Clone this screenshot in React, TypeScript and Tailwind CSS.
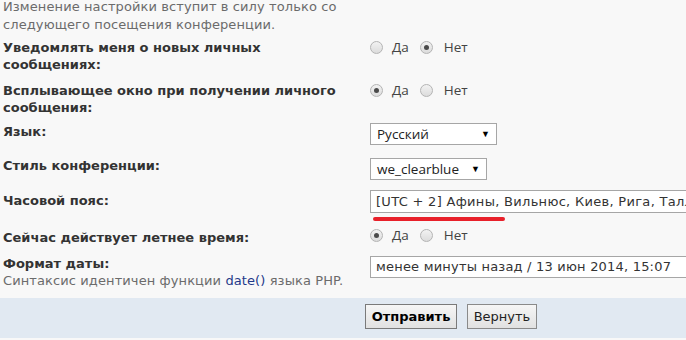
import React from "react";

function Radio({ checked }: { checked: boolean }) {
  return (
    <span className="w-[13px] h-[13px] rounded-full border border-[#b4b4b4] bg-gradient-to-b from-[#f2f2f2] to-[#dcdcdc] flex items-center justify-center shrink-0">
      {checked && <span className="w-[5px] h-[5px] rounded-full bg-[#4a4a4a]" />}
    </span>
  );
}

function YesNo({ yes }: { yes: boolean }) {
  return (
    <div className="flex items-center h-[17px] text-[13.5px] text-[#444] font-['Open_Sans',sans-serif]">
      <Radio checked={yes} />
      <span className="ml-[9px]">Да</span>
      <span className="ml-[11px]"><Radio checked={!yes} /></span>
      <span className="ml-[11px]">Нет</span>
    </div>
  );
}

function Select({ value, width }: { value: string; width: string }) {
  return (
    <div className={`${width} h-[22px] bg-white border border-[#a6a6a6] flex items-center justify-between pl-[6px] pr-[6px] text-[13.5px] text-[#222] font-['Open_Sans',sans-serif]`}>
      <span>{value}</span>
      <span className="text-[9px] text-black">▼</span>
    </div>
  );
}

export default function App() {
  const label = "shrink-0 whitespace-nowrap text-[13px] leading-[17px] font-bold text-[#333]";
  return (
    <div className="w-[686px] h-[340px] overflow-hidden bg-[#f8f8f8] font-['DejaVu_Sans',Verdana,sans-serif]">
      <div className="h-[36px] pl-[3px]">
        <p className="-mt-[2px] text-[13px] leading-[18px] tracking-[0.1px] text-[#6b6b6b] whitespace-nowrap">
          Изменение настройки вступит в силу только со<br />следующего посещения конференции.
        </p>
      </div>

      <div className="flex h-[43px]">
        <div className={`w-[365px] pl-[3px] pt-[5px] ${label}`}>
          Уведомлять меня о новых личных<br />сообщениях:
        </div>
        <div className="pl-[5px] pt-[5px]">
          <YesNo yes={false} />
        </div>
      </div>

      <div className="flex h-[39px]">
        <div className={`w-[365px] pl-[3px] pt-[5px] ${label}`}>
          Всплывающее окно при получении личного<br />сообщения:
        </div>
        <div className="pl-[5px] pt-[5px]">
          <YesNo yes={true} />
        </div>
      </div>

      <div className="flex h-[34px]">
        <div className={`w-[365px] pl-[3px] pt-[7px] ${label}`}>Язык:</div>
        <div className="pl-[5px] pt-[7px]">
          <Select value="Русский" width="w-[127px]" />
        </div>
      </div>

      <div className="flex h-[34px]">
        <div className={`w-[365px] pl-[3px] pt-[7px] ${label}`}>Стиль конференции:</div>
        <div className="pl-[5px] pt-[8px]">
          <Select value="we_clearblue" width="w-[117px]" />
        </div>
      </div>

      <div className="flex h-[40px]">
        <div className={`w-[365px] pl-[3px] pt-[8px] ${label}`}>Часовой пояс:</div>
        <div className="shrink-0 pl-[5px] pt-[6px] relative">
          <div className="w-[340px] h-[23px] bg-white border border-[#a6a6a6] flex items-center pl-[5px] text-[13px] tracking-[0.3px] text-[#333] whitespace-nowrap overflow-hidden">
            [UTC + 2] Афины, Вильнюс, Киев, Рига, Таллин
          </div>
          <div className="absolute left-[8px] top-[33px] w-[132px] h-[4px] rounded-full bg-[#e8202a]" />
        </div>
      </div>

      <div className="flex h-[26px]">
        <div className={`w-[365px] pl-[3px] pt-[5px] ${label}`}>Сейчас действует летнее время:</div>
        <div className="pl-[5px] pt-[3px]">
          <YesNo yes={true} />
        </div>
      </div>

      <div className="flex h-[48px]">
        <div className="shrink-0 w-[365px] pl-[3px] pt-[5px] leading-[17px] whitespace-nowrap">
          <div className="text-[13px] font-bold text-[#333]">Формат даты:</div>
          <div className="text-[13px] tracking-[0.1px] text-[#6b6b6b]">
            Синтаксис идентичен функции <span className="text-[#1f3a8a]">date()</span> языка PHP.
          </div>
        </div>
        <div className="shrink-0 pl-[5px] pt-[6px]">
          <div className="w-[340px] h-[22px] bg-white border border-[#a6a6a6] flex items-center pl-[5px] text-[13px] tracking-[0.2px] text-[#333] whitespace-nowrap overflow-hidden">
            менее минуты назад / 13 июн 2014, 15:07
          </div>
        </div>
      </div>

      <div className="h-[40px] bg-[#e1e9f2] flex items-start pt-[6px] pl-[365px] gap-[10px]">
        <button className="w-[92px] h-[25px] border border-[#7a7a7a] bg-gradient-to-b from-[#f6f6f6] to-[#e1e1e1] text-[13px] font-bold text-black">
          Отправить
        </button>
        <button className="w-[70px] h-[25px] border border-[#8a8a8a] bg-gradient-to-b from-[#f6f6f6] to-[#e1e1e1] text-[13px] text-[#222]">
          Вернуть
        </button>
      </div>
    </div>
  );
}
